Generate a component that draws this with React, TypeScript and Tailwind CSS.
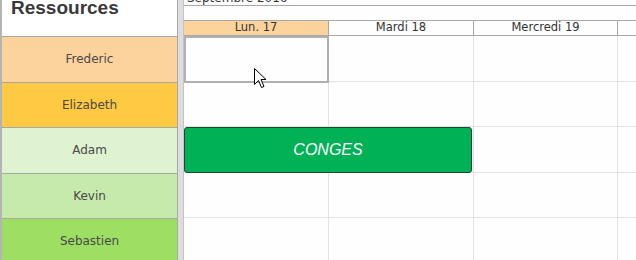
import React from "react";

const resources = [
  { name: "Frederic", bg: "bg-[#fdd39d]" },
  { name: "Elizabeth", bg: "bg-[#ffc942]" },
  { name: "Adam", bg: "bg-[#dff3d1]" },
  { name: "Kevin", bg: "bg-[#c6eaab]" },
  { name: "Sebastien", bg: "bg-[#9cdf63]" },
];

const days = [
  { label: "Lun. 17", hl: true, w: "w-[145px]" },
  { label: "Mardi 18", hl: false, w: "w-[145px]" },
  { label: "Mercredi 19", hl: false, w: "w-[144px]" },
  { label: "", hl: false, w: "w-[60px]" },
];

const tahoma = { fontFamily: '"DejaVu Sans", Verdana, sans-serif' };

export default function App() {
  return (
    <div className="relative flex w-[636px] h-[260px] overflow-hidden bg-[#fefefe]">
      {/* Resources column */}
      <div className="flex flex-col w-[178px] shrink-0 border-l-2 border-r border-l-[#b4b4b4] border-r-[#a8a8a8]">
        <div className="h-[37px] shrink-0 bg-white border-b border-[#a8a8a8] pl-[9px]">
          <div
            className="text-[19px] font-bold text-[#3a3a3a] leading-none -mt-[2px]"
            style={{ fontFamily: '"Liberation Sans", Arial, sans-serif' }}
          >
            Ressources
          </div>
        </div>
        {resources.map((r) => (
          <div
            key={r.name}
            className={`h-[45.5px] shrink-0 flex items-center justify-center border-b border-[#a8a8a8] ${r.bg} text-[12px] text-[#4a4848]`}
            style={tahoma}
          >
            {r.name}
          </div>
        ))}
      </div>

      {/* Splitter */}
      <div className="w-[6px] shrink-0 bg-[#dddde0] border-r border-[#c4c4c8]" />

      {/* Planning grid */}
      <div className="flex flex-col flex-1 min-w-0">
        <div className="h-[6px] shrink-0 border-b border-[#a8a8a8] overflow-hidden pl-[3px]">
          <div className="text-[12px] leading-none -mt-[8px] text-[#333]" style={tahoma}>
            Septembre 2016
          </div>
        </div>
        <div className="h-[15px] shrink-0 border-b border-[#a8a8a8]" />
        <div className="h-[15px] shrink-0 flex border-b border-[#a8a8a8]">
          {days.map((d, i) => (
            <div
              key={i}
              className={`${d.w} shrink-0 border-r border-[#a8a8a8] flex items-center justify-center text-[11.5px] leading-none text-[#333] ${d.hl ? "bg-[#fdd39d]" : ""}`}
              style={tahoma}
            >
              {d.label}
            </div>
          ))}
        </div>
        {resources.map((r, ri) => (
          <div key={ri} className="h-[45.5px] shrink-0 flex border-b border-[#e2e2e2]">
            {days.map((d, i) => (
              <div key={i} className={`${d.w} shrink-0 border-r border-[#e2e2e2]`} />
            ))}
          </div>
        ))}
      </div>

      {/* Selected cell */}
      <div className="absolute left-[184px] top-[36px] w-[145px] h-[47px] border-2 border-[#b0b0b0]" />

      {/* Event */}
      <div
        className="absolute left-[184px] top-[127px] w-[288px] h-[46px] rounded-[3px] bg-[#00b156] border border-[#1b4a2c] flex items-center justify-center text-white italic text-[16px]"
        style={{ fontFamily: '"Liberation Sans", Arial, sans-serif' }}
      >
        CONGES
      </div>

      {/* Mouse cursor */}
      <svg
        className="absolute left-[254px] top-[68px]"
        width="13"
        height="21"
        viewBox="0 0 13 21"
      >
        <path
          d="M0.5 0.5 L0.5 16.5 L4.5 12.5 L7.5 19.5 L10 18.5 L7 11.5 L12 11.5 Z"
          fill="white"
          stroke="black"
          strokeWidth="1"
          strokeLinejoin="miter"
        />
      </svg>
    </div>
  );
}
